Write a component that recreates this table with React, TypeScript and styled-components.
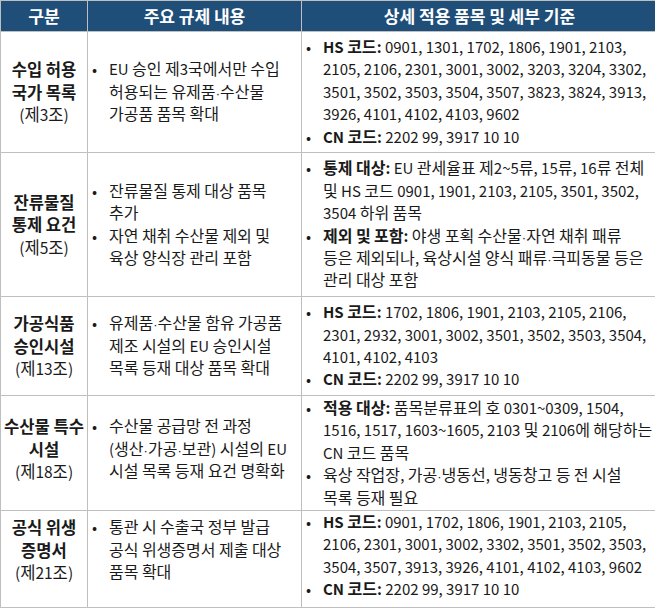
import React from "react";
import styled, { createGlobalStyle } from "styled-components";

const GlobalStyle = createGlobalStyle`
  html, body {
    margin: 0;
    padding: 0;
    background: #ffffff;
  }
  body {
    font-family: "Noto Sans CJK KR", "Noto Sans", sans-serif;
    color: #1a1a1a;
  }
`;

const Table = styled.table`
  width: 654px;
  border-collapse: collapse;
  table-layout: fixed;
  font-size: 15px;
  line-height: 22.4px;
`;

const HeadRow = styled.tr`
  height: 31px;
`;

const HeadCell = styled.th<{ $w: number }>`
  width: ${(p) => p.$w}px;
  background: #1f4e79;
  color: #ffffff;
  font-weight: 700;
  font-size: 16px;
  text-align: center;
  vertical-align: middle;
  padding: 0;
  border: 1px solid #bfbfbf;
`;

const Row = styled.tr<{ $h: number }>`
  height: ${(p) => p.$h}px;
`;

const CategoryCell = styled.td<{ $pad: number }>`
  border: 1px solid #bfbfbf;
  text-align: center;
  vertical-align: middle;
  padding: 0 0 ${(p) => p.$pad}px 0;
  white-space: nowrap;
  font-size: 15.5px;
`;

const CategoryName = styled.div`
  font-weight: 700;
`;

const Article = styled.div`
  font-weight: 400;
`;

const ContentCell = styled.td<{ $pad: number; $top?: boolean }>`
  border: 1px solid #bfbfbf;
  vertical-align: ${(p) => (p.$top ? "top" : "middle")};
  padding: 0 0 ${(p) => p.$pad}px 3px;
`;

const BulletList = styled.ul`
  list-style: none;
  margin: 0;
  padding: 0;
`;

const BulletItem = styled.li`
  display: flex;
  &::before {
    content: "•";
    flex: 0 0 18px;
    width: 18px;
    padding-left: 1px;
    box-sizing: border-box;
  }
`;

const ItemText = styled.div`
  flex: 1;
`;

const Line = styled.span`
  display: block;
  white-space: nowrap;
  height: 22.4px;
`;

const Label = styled.b`
  font-weight: 700;
`;

const Hangul = styled.span`
  font-size: 1.07em;
  line-height: 1;
`;

const MidDot = styled.span`
  font-family: "Liberation Sans", sans-serif;
  font-size: 0.87em;
  line-height: 1;
`;

const HANGUL_RUN = /([\uAC00-\uD7A3\u3131-\u318E]+)/;

function Text({ s }: { s: string }) {
  const parts = s.split(HANGUL_RUN);
  return (
    <>
      {parts.map((p, i) => {
        if (!p) return null;
        if (i % 2 === 1) return <Hangul key={i}>{p}</Hangul>;
        const dots = p.split("·");
        return (
          <React.Fragment key={i}>
            {dots.map((d, j) => (
              <React.Fragment key={j}>
                {j > 0 && <MidDot>·</MidDot>}
                {d}
              </React.Fragment>
            ))}
          </React.Fragment>
        );
      })}
    </>
  );
}

type Detail = { label?: string; lines: string[] };
type RowData = {
  h: number;
  pad: number;
  detailPad: number;
  detailTop?: boolean;
  name: string[];
  art: string;
  main: string[][];
  detail: Detail[];
};

const rows: RowData[] = [
  {
    h: 121,
    pad: 0,
    detailPad: 0,
    name: ["수입 허용", "국가 목록"],
    art: "(제3조)",
    main: [["EU 승인 제3국에서만 수입", "허용되는 유제품·수산물", "가공품 품목 확대"]],
    detail: [
      {
        label: "HS 코드:",
        lines: [
          "0901, 1301, 1702, 1806, 1901, 2103,",
          "2105, 2106, 2301, 3001, 3002, 3203, 3204, 3302,",
          "3501, 3502, 3503, 3504, 3507, 3823, 3824, 3913,",
          "3926, 4101, 4102, 4103, 9602",
        ],
      },
      { label: "CN 코드:", lines: ["2202 99, 3917 10 10"] },
    ],
  },
  {
    h: 144,
    pad: 0,
    detailPad: 0,
    name: ["잔류물질", "통제 요건"],
    art: "(제5조)",
    main: [
      ["잔류물질 통제 대상 품목", "추가"],
      ["자연 채취 수산물 제외 및", "육상 양식장 관리 포함"],
    ],
    detail: [
      {
        label: "통제 대상:",
        lines: [
          "EU 관세율표 제2~5류, 15류, 16류 전체",
          "및 HS 코드 0901, 1901, 2103, 2105, 3501, 3502,",
          "3504 하위 품목",
        ],
      },
      {
        label: "제외 및 포함:",
        lines: [
          "야생 포획 수산물·자연 채취 패류",
          "등은 제외되나, 육상시설 양식 패류·극피동물 등은",
          "관리 대상 포함",
        ],
      },
    ],
  },
  {
    h: 99,
    pad: 0,
    detailPad: 0,
    name: ["가공식품", "승인시설"],
    art: "(제13조)",
    main: [["유제품·수산물 함유 가공품", "제조 시설의 EU 승인시설", "목록 등재 대상 품목 확대"]],
    detail: [
      {
        label: "HS 코드:",
        lines: [
          "1702, 1806, 1901, 2103, 2105, 2106,",
          "2301, 2932, 3001, 3002, 3501, 3502, 3503, 3504,",
          "4101, 4102, 4103",
        ],
      },
      { label: "CN 코드:", lines: ["2202 99, 3917 10 10"] },
    ],
  },
  {
    h: 115,
    pad: 8,
    detailPad: 0,
    name: ["수산물 특수", "시설"],
    art: "(제18조)",
    main: [["수산물 공급망 전 과정", "(생산·가공·보관) 시설의 EU", "시설 목록 등재 요건 명확화"]],
    detail: [
      {
        label: "적용 대상:",
        lines: [
          "품목분류표의 호 0301~0309, 1504,",
          "1516, 1517, 1603~1605, 2103 및 2106에 해당하는",
          "CN 코드 품목",
        ],
      },
      { lines: ["육상 작업장, 가공·냉동선, 냉동창고 등 전 시설", "목록 등재 필요"] },
    ],
  },
  {
    h: 97,
    pad: 18,
    detailPad: 0,
    detailTop: true,
    name: ["공식 위생", "증명서"],
    art: "(제21조)",
    main: [["통관 시 수출국 정부 발급", "공식 위생증명서 제출 대상", "품목 확대"]],
    detail: [
      {
        label: "HS 코드:",
        lines: [
          "0901, 1702, 1806, 1901, 2103, 2105,",
          "2106, 2301, 3001, 3002, 3302, 3501, 3502, 3503,",
          "3504, 3507, 3913, 3926, 4101, 4102, 4103, 9602",
        ],
      },
      { label: "CN 코드:", lines: ["2202 99, 3917 10 10"] },
    ],
  },
];

export default function App() {
  return (
    <>
      <GlobalStyle />
      <Table>
        <thead>
          <HeadRow>
            <HeadCell $w={86}>
              <Text s="구분" />
            </HeadCell>
            <HeadCell $w={213}>
              <Text s="주요 규제 내용" />
            </HeadCell>
            <HeadCell $w={355}>
              <Text s="상세 적용 품목 및 세부 기준" />
            </HeadCell>
          </HeadRow>
        </thead>
        <tbody>
          {rows.map((r, i) => (
            <Row key={i} $h={r.h}>
              <CategoryCell $pad={r.pad}>
                {r.name.map((n, j) => (
                  <CategoryName key={j}>
                    <Text s={n} />
                  </CategoryName>
                ))}
                <Article>
                  <Text s={r.art} />
                </Article>
              </CategoryCell>
              <ContentCell $pad={r.pad}>
                <BulletList>
                  {r.main.map((item, j) => (
                    <BulletItem key={j}>
                      <ItemText>
                        {item.map((l, k) => (
                          <Line key={k}>
                            <Text s={l} />
                          </Line>
                        ))}
                      </ItemText>
                    </BulletItem>
                  ))}
                </BulletList>
              </ContentCell>
              <ContentCell $pad={r.detailPad} $top={r.detailTop}>
                <BulletList>
                  {r.detail.map((d, j) => (
                    <BulletItem key={j}>
                      <ItemText>
                        {d.lines.map((l, k) => (
                          <Line key={k}>
                            {k === 0 && d.label ? (
                              <>
                                <Label>
                                  <Text s={d.label} />
                                </Label>{" "}
                              </>
                            ) : null}
                            <Text s={l} />
                          </Line>
                        ))}
                      </ItemText>
                    </BulletItem>
                  ))}
                </BulletList>
              </ContentCell>
            </Row>
          ))}
        </tbody>
      </Table>
    </>
  );
}
